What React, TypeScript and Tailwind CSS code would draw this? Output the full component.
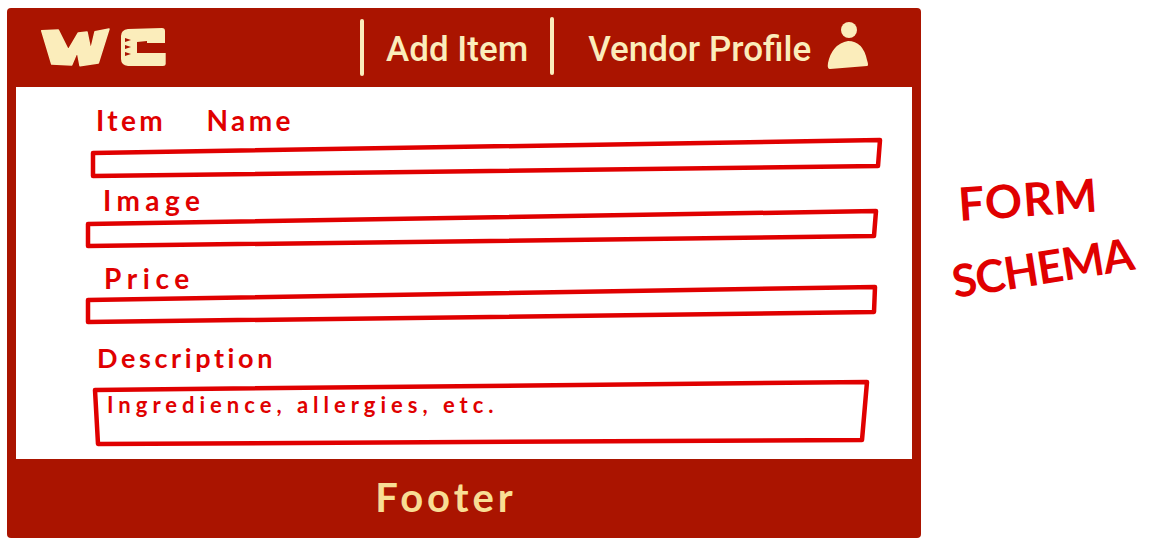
import React from 'react';

// form rows, polygons are the hand drawn field outlines
const fields = [
  { label: 'Item Name', labelClass: 'mt-0 pl-[80px] text-[28px] tracking-[3.4px] [word-spacing:30px]', svgClass: 'mt-0', points: '77,18 864,5 862,31 77,41' },
  { label: 'Image', labelClass: 'mt-[6px] pl-[87px] text-[28px] tracking-[5.4px]', svgClass: '-mt-[9px]', points: '72,18 860,5 858,30 72,40' },
  { label: 'Price', labelClass: 'mt-[13px] pl-[88px] text-[28px] tracking-[5.6px]', svgClass: '-mt-[11px]', points: '72,18 859,5 858,30 72,40' },
];

function Logo() {
  return (
    <svg viewBox="0 0 126 40" className="h-[40px] w-[126px] shrink-0" role="img" aria-label="WC logo">
      <path
        d="M0.7 2.7 L17.3 2 L27.3 22 L37.3 5 L46 4 L49.7 22 L54 3.7 L68 1 L57.3 35 L39 37.7 L36.3 23.7 L30.7 37 L10.7 36 Z"
        fill="#fbedbb"
        stroke="#fbedbb"
        strokeWidth="1.5"
        strokeLinejoin="round"
      />
      <path
        fillRule="evenodd"
        d="M87 1 L121 0 Q124 0 124 3 L124 15 L106 15 L106 13 L96 14 L96 25 L106 25 L124.7 25 L124.7 36 Q124.7 38 122 38 L87 38 Q80 37 80 31 L80 8 Q80 2 87 1 Z M84 10 L90 12 L84 14 Z M84 17 L90 19 L84 21 Z M84 24 L90 26 L84 28 Z"
        fill="#fbedbb"
      />
    </svg>
  );
}

function PersonIcon() {
  return (
    <svg viewBox="0 0 42 48" className="h-[48px] w-[42px] shrink-0" fill="#fbedbb" aria-hidden="true">
      <circle cx="22" cy="8" r="8" />
      <path d="M3 47 Q0 47 1 41 Q5 22 21 19 Q36 19 40 38 Q42 44 40 44 Z" />
    </svg>
  );
}

export default function App() {
  return (
    <div className="flex h-[542px] w-[1149px] overflow-hidden bg-white font-['Liberation_Sans',sans-serif]">
      {/* wireframe */}
      <div className="ml-[7px] mt-[8px] flex h-[530px] w-[914px] shrink-0 flex-col overflow-hidden rounded-[4px] bg-[#aa1400] px-[9px]">
        <header className="flex h-[79px] shrink-0 items-center font-['Roboto',sans-serif] text-[35px] font-medium text-[#fbedbb]">
          <div className="ml-[25px]">
            <Logo />
          </div>
          <div className="ml-[193px] h-[57px] w-[4px] rounded-full bg-[#fbedbb]" />
          <span className="ml-[22px] mt-[6px]">Add Item</span>
          <div className="-mt-[4px] ml-[22px] h-[58px] w-[4px] rounded-full bg-[#fbedbb]" />
          <span className="ml-[34px] mt-[5px]">Vendor Profile</span>
          <div className="-mt-[4px] ml-[16px]">
            <PersonIcon />
          </div>
        </header>

        <main className="flex h-[372px] shrink-0 flex-col bg-white pt-[18px] font-['Lato',sans-serif] font-bold text-[#e00000]">
          {fields.map((field) => (
            <div key={field.label}>
              <div className={`h-[30px] leading-[30px] ${field.labelClass}`}>{field.label}</div>
              <svg viewBox="0 0 896 44" className={`block h-[44px] w-[896px] ${field.svgClass}`} aria-hidden="true">
                <polygon points={field.points} fill="none" stroke="#e00000" strokeWidth="4.5" strokeLinejoin="round" />
              </svg>
            </div>
          ))}

          <div className="mt-[17px] h-[30px] pl-[81px] text-[27px] leading-[30px] tracking-[3.6px]">Description</div>
          <div className="relative mt-[4px]">
            <svg viewBox="0 0 896 72" className="block h-[72px] w-[896px]" aria-hidden="true">
              <polygon points="79,13 851,5 846,63 82,67" fill="none" stroke="#e00000" strokeWidth="4.5" strokeLinejoin="round" />
            </svg>
            <span className="absolute left-[91px] top-[15px] text-[22px] leading-[26px] tracking-[5px]">
              Ingredience, allergies, etc.
            </span>
          </div>
        </main>

        <footer className="flex flex-1 items-center justify-center pb-[4px] pr-[36px] font-['Lato',sans-serif] text-[40px] font-bold tracking-[4px] text-[#f8dd94]">
          Footer
        </footer>
      </div>

      {/* side note */}
      <aside className="ml-[37px] flex flex-col pt-[175px] font-['Lato',sans-serif] font-bold leading-none text-[#e00000]">
        <span className="-rotate-[4deg] text-[46px] tracking-[1px]">FORM</span>
        <span className="-ml-[7px] mt-[24px] -rotate-[9deg] whitespace-nowrap text-[45px] -tracking-[1px]">SCHEMA</span>
      </aside>
    </div>
  );
}
